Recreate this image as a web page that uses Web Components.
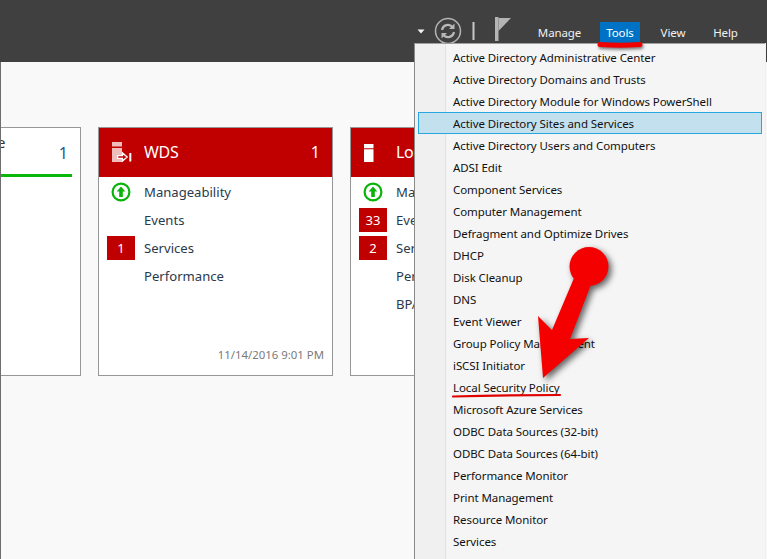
<!DOCTYPE html>
<html><head><meta charset="utf-8">
<style>
html,body{margin:0;padding:0;width:767px;height:559px;overflow:hidden;background:#f9f9f9;font-family:"Noto Sans","Open Sans",sans-serif}
</style></head>
<body>
<server-manager>
  <top-bar slot="bar"></top-bar>
  <server-card slot="cards" class="first" title-text="e" count="1" state="ok"></server-card>
  <server-card slot="cards" title-text="WDS" count="1" state="alert" icon="wds" date="11/14/2016 9:01 PM">
    <card-row icon="up">Manageability</card-row>
    <card-row>Events</card-row>
    <card-row badge="1">Services</card-row>
    <card-row>Performance</card-row>
  </server-card>
  <server-card slot="cards" title-text="Local Server" count="1" state="alert" icon="server">
    <card-row icon="up">Manageability</card-row>
    <card-row badge="33">Events</card-row>
    <card-row badge="2">Services</card-row>
    <card-row>Performance</card-row>
    <card-row>BPA results</card-row>
  </server-card>
  <tools-menu slot="menu">
    <menu-item>Active Directory Administrative Center</menu-item>
    <menu-item>Active Directory Domains and Trusts</menu-item>
    <menu-item>Active Directory Module for Windows PowerShell</menu-item>
    <menu-item active>Active Directory Sites and Services</menu-item>
    <menu-item>Active Directory Users and Computers</menu-item>
    <menu-item>ADSI Edit</menu-item>
    <menu-item>Component Services</menu-item>
    <menu-item>Computer Management</menu-item>
    <menu-item>Defragment and Optimize Drives</menu-item>
    <menu-item>DHCP</menu-item>
    <menu-item>Disk Cleanup</menu-item>
    <menu-item>DNS</menu-item>
    <menu-item>Event Viewer</menu-item>
    <menu-item>Group Policy Management</menu-item>
    <menu-item>iSCSI Initiator</menu-item>
    <menu-item>Local Security Policy</menu-item>
    <menu-item>Microsoft Azure Services</menu-item>
    <menu-item>ODBC Data Sources (32-bit)</menu-item>
    <menu-item>ODBC Data Sources (64-bit)</menu-item>
    <menu-item>Performance Monitor</menu-item>
    <menu-item>Print Management</menu-item>
    <menu-item>Resource Monitor</menu-item>
    <menu-item>Services</menu-item>
  </tools-menu>
  <red-annotation slot="menu"></red-annotation>
</server-manager>
<script>
function def(name, html){
  customElements.define(name, class extends HTMLElement{
    connectedCallback(){
      if(this.shadowRoot) return;
      const r=this.attachShadow({mode:'open'});
      r.innerHTML=typeof html==='function'?html(this):html;
    }
  });
}
def('server-manager',`<style>
:host{display:block;position:relative;width:767px;height:559px;overflow:hidden;background:#f9f9f9}
.cards{display:flex;gap:17px;align-items:flex-start;padding-top:65px;border-left:1px solid #6e6e6e;height:432px;overflow:hidden}
</style>
<slot name="bar"></slot>
<div class="cards"><slot name="cards"></slot></div>
<slot name="menu"></slot>`);

def('top-bar',`<style>
:host{display:flex;height:62px;background:#404040;color:#f0f0f0;font-size:11.500px;letter-spacing:-.1px;box-sizing:border-box;padding-left:417px}
svg{display:block;flex:none}
.ico{display:flex;align-items:flex-start;padding-top:16px;height:46px;box-sizing:border-box}
nav{display:flex;margin-left:27px;padding-top:22px;height:21px;align-items:stretch}
a{display:flex;align-items:center;justify-content:center;height:21px;line-height:21px;flex:none}
.m{width:43px;margin-right:19px}
.t{width:40px;background:#0072c6;color:#fff;margin-right:20px}
.v{width:26px;margin-right:27px}
.h{width:25px}
</style>
<div class="ico">
<svg width="94" height="28" viewBox="0 0 94 28">
 <path d="M0.5 13.5h7l-3.500 4z" fill="#f4f4f4"/>
 <circle cx="31" cy="15" r="12.500" fill="none" stroke="#b4b4b4" stroke-width="1.500"/>
 <path d="M25 14a6 6 0 0 1 10.500-3" fill="none" stroke="#b8b8b8" stroke-width="2.200"/>
 <path d="M37.500 7.500v5.500h-5.500z" fill="#b8b8b8"/>
 <path d="M37 16a6 6 0 0 1-10.500 3" fill="none" stroke="#b8b8b8" stroke-width="2.200"/>
 <path d="M24.500 22.500v-5.500h5.500z" fill="#b8b8b8"/>
 <rect x="55.500" y="6" width="2" height="18" fill="#c8c8c8"/>
 <rect x="78" y="1" width="3.500" height="24" fill="#b4b4b4"/>
 <path d="M81.500 2H94L81.500 15z" fill="#b4b4b4"/>
</svg></div>
<nav><a class="m">Manage</a><a class="t">Tools</a><a class="v">View</a><a class="h">Help</a></nav>`);

const cardHTML=el=>{
  const state=el.getAttribute('state'), first=el.classList.contains('first');
  const ic=el.getAttribute('icon');
  const icon= ic==='wds'?`<svg width="30" height="24" viewBox="0 0 30 24"><path d="M0 0h10v4.500H0zM0 6h10v14H0z" fill="#f0bcbc"/><path d="M5.600 13.700h4.900v-2.700l4.700 4-4.700 4v-2.700H5.600z" fill="#c00000" stroke="#fff" stroke-width="1.300"/><rect x="17.300" y="11" width="2" height="8.500" fill="#fff"/></svg>`
   : ic==='server'?`<svg width="30" height="24" viewBox="0 0 30 24"><path d="M0 2h9.500v4.200H0zM0 7.200h9.500V20H0z" fill="#fff"/></svg>`:'';
  return `<style>
:host{display:block;flex:none;box-sizing:border-box;width:235px;height:249px;border:1px solid #979797;background:#fff;color:#2a3a4c;position:relative;overflow:hidden}
:host(.first){width:80px;border-left:0}
.head{display:flex;align-items:center;height:49px;box-sizing:border-box;padding:0 12px 1px 13px;font-size:16px}
.alert{background:#c00000;color:#fff}
.ic{width:32px;flex:none;height:20px}
.t{flex:1;white-space:nowrap;overflow:hidden;letter-spacing:-.3px}
.c{flex:none;width:16px;text-align:right}
.ok{display:block;height:49px;padding:0;color:#1e5a8c}
.ok .e{font-size:15px;position:absolute;left:-4px;top:4px;color:#333}
.ok .c{position:absolute;left:51px;top:14px;width:16px;text-align:right;font-size:16px}
.ok .bar{position:absolute;left:0;top:46px;width:71px;height:3px;background:#0ab80a}
.rows{display:flex;flex-direction:column;padding-top:1px}
.date{position:absolute;right:8px;bottom:12px;font-size:11.400px;color:#7a7a7a;line-height:16px}
</style>
${first?`<div class="head ok"><span class="e">${el.getAttribute('title-text')}</span><span class="c">${el.getAttribute('count')}</span><span class="bar"></span></div>`
:`<div class="head ${state}"><span class="ic">${icon}</span><span class="t">${el.getAttribute('title-text')}</span><span class="c">${el.getAttribute('count')}</span></div>
<div class="rows"><slot></slot></div>
${el.getAttribute('date')?`<div class="date">${el.getAttribute('date')}</div>`:''}`}`;
};
def('server-card',cardHTML);

def('card-row',el=>{
  const b=el.getAttribute('badge'), i=el.getAttribute('icon');
  return `<style>
:host{display:flex;align-items:center;height:28px;padding-left:8px;font-size:13.100px;color:#2a3a4c;white-space:nowrap;margin-top:-.5px;margin-bottom:.5px}
.s{width:28px;height:24px;flex:none;margin-right:9px;display:flex;align-items:center;justify-content:center}
.b{background:#c00000;color:#fff;font-size:13px}
svg{display:block}
</style>
<span class="s ${b?'b':''}">${b||''}${i==='up'?`<svg width="20" height="20" viewBox="0 0 20 20" style="margin-left:-1px"><circle cx="10" cy="10" r="8.400" fill="#fff" stroke="#0ab30a" stroke-width="2.200"/><path d="M10 4.500l4.300 5H11.800v5.500H8.200V9.500H5.700z" fill="#0ab30a"/></svg>`:''}</span><span><slot></slot></span>`;
});

def('tools-menu',`<style>
:host{display:block;position:absolute;left:414px;top:43px;width:351px;height:516px;box-sizing:border-box;background:#f5f5f5;border-top:1px solid #a0a0a0;border-left:1px solid #8a8a8a;padding:2px 3px 0 3px;box-shadow:1px 0 0 #efefef}
.gut{position:absolute;left:0;top:0;bottom:0;width:30px;background:#f0f0f0;border-right:1px solid #e2e2e2}
.l{position:relative;display:flex;flex-direction:column}
</style><div class="gut"></div><div class="l"><slot></slot></div>`);

def('menu-item',`<style>
:host{display:flex;align-items:center;height:22px;box-sizing:border-box;padding-left:34px;font-size:11.500px;letter-spacing:-.08px;color:#111;white-space:nowrap;border:1px solid transparent}
:host([active]){background:#c3e0ef;border-color:#28a8e0}
</style><slot></slot>`);

def('red-annotation',`<style>
:host{display:block;position:absolute;left:0;top:0;width:767px;height:559px;pointer-events:none}
svg{display:block;overflow:visible}
.s{filter:drop-shadow(3px 3px 3px rgba(0,0,0,.6))}
.u{filter:drop-shadow(1px 2px 1.500px rgba(0,0,0,.5))}
</style>
<svg width="767" height="559" viewBox="0 0 767 559">
 <g class="u"><path d="M600 44.500 Q620 46 640 44.500" fill="none" stroke="#f00000" stroke-width="5" stroke-linecap="round"/></g>
 <path d="M453 396.500 Q505 395 560 395" fill="none" stroke="#e00000" stroke-width="2.200" stroke-linecap="round"/>
 <g class="s"><circle cx="589" cy="266.500" r="19.500" fill="#f50000"/><path fill="#f50000" d="M574 278 L552 330 L538 316 L543 378 L589 338 L570 339 L592 282Z"/></g>
</svg>`);
</script>
</body></html>
